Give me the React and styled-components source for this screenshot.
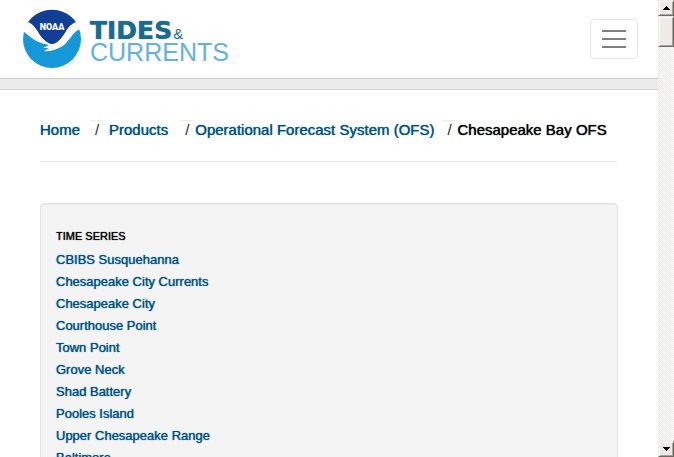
import React from "react";
import styled, { createGlobalStyle } from "styled-components";

const GlobalStyle = createGlobalStyle`
  *, *::before, *::after { box-sizing: border-box; }
  body {
    margin: 0;
    background: #fff;
    color: #000;
    font-family: "Liberation Sans", Arial, sans-serif;
  }
`;

const Shell = styled.div`
  display: flex;
  height: 100vh;
  overflow: hidden;
`;

const Page = styled.div`
  flex: 1;
  min-width: 0;
  overflow: hidden;
`;

const Header = styled.header`
  display: flex;
  align-items: center;
  justify-content: space-between;
  height: 78px;
  padding: 0 20px 0 22px;
`;

const Brand = styled.a`
  display: flex;
  align-items: center;
  gap: 8px;
  text-decoration: none;
`;

const Wordmark = styled.span`
  display: flex;
  flex-direction: column;
  padding-top: 4px;
`;

const WordTop = styled.span`
  display: flex;
  align-items: baseline;
  gap: 1px;
  color: #1b6b91;
  font-size: 15px;
  line-height: 19px;
`;

const Tides = styled.strong`
  font-family: "DejaVu Sans", "Liberation Sans", sans-serif;
  font-size: 25px;
  font-weight: 700;
  text-shadow: 0 0 1px currentColor;
`;

const Currents = styled.span`
  color: #62b1df;
  font-size: 25px;
  line-height: 19px;
`;

const MenuButton = styled.button`
  display: grid;
  place-items: center;
  width: 48px;
  height: 40px;
  padding: 0;
  background: #fff;
  border: 1px solid #e5e5e5;
  border-radius: 4px;
`;

const Band = styled.div`
  height: 12px;
  background: #ebebeb;
  border-top: 1px solid #ccc;
  border-bottom: 1px solid #d4d4d4;
`;

const Content = styled.main`
  padding: 30px 40px 0;
`;

const Crumbs = styled.ol`
  display: flex;
  margin: 0 0 41px;
  padding: 0 0 21px;
  list-style: none;
  border-bottom: 1px solid #eee;
  font-size: 15px;
  line-height: 20px;
  white-space: nowrap;
`;

const Crumb = styled.li`
  display: flex;
`;

const Separator = styled.span`
  width: 15px;
  margin-left: ${(p) => p.$gap}px;
  margin-right: ${(p) => (p.$spaced ? 4 : 0)}px;
  padding-left: 5px;
  border-top: 1px solid #eee;
  color: #222;
  line-height: 18px;
`;

const Link = styled.a`
  color: #00507f;
  text-decoration: none;
  text-shadow: 0 0 1px currentColor;
`;

const Current = styled.span`
  text-shadow: 0 0 1px currentColor;
`;

const Panel = styled.section`
  padding: 21px 15px;
  background: #f4f4f4;
  border: 1px solid #e3e3e3;
  border-radius: 4px;
  box-shadow: inset 0 1px 1px #e9e9e9;
`;

const PanelTitle = styled.h2`
  margin: 0 0 2px;
  font-size: 11px;
  font-weight: 400;
  line-height: 22px;
  text-shadow: 0 0 1px currentColor;
`;

const StationList = styled.ul`
  margin: 0;
  padding: 0;
  list-style: none;
  font-size: 13px;
  line-height: 22px;
`;

const ScrollTrack = styled.div`
  display: flex;
  flex: 0 0 16px;
  flex-direction: column;
  background: repeating-conic-gradient(#eeebe6 0 25%, #fff 0 50%) 0 0 / 2px 2px;
`;

const ScrollPart = styled.button`
  display: grid;
  place-items: center;
  flex: none;
  width: 16px;
  height: ${(p) => p.$height}px;
  margin-top: ${(p) => (p.$last ? "auto" : "0")};
  padding: 0;
  background: #eeebe6;
  border: 1px solid;
  border-color: #eeebe6 #6e6b67 #6e6b67 #eeebe6;
  box-shadow: inset 1px 1px #fff, inset -1px -1px #a8a49e;
`;

const NoaaSeal = () => (
  <svg width="60" height="60" viewBox="0 0 60 60" aria-hidden="true">
    <circle cx="30" cy="30" r="29" fill="#1697d8" />
    <path d="M5 15A29 29 0 0 1 55 15C46 19 43 36 34 37Q30 38 26 36C17 32 15 18 5 15Z" fill="#123f96" />
    <path
      d="M1 22L6 13C14 16 17 27 24 32C28 35 31 36 35 33C42 28 44 17 54 13L58 20C50 23 47 34 39 38C34 40 30 43 22 42L27 39L21 39L27 36C15 34 9 29 1 22Z"
      fill="#fff"
    />
    <path d="M12 13Q17 28 25 33Q30 37 35 33Q43 27 48 13Z" fill="#123f96" />
    <text x="30" y="21" textAnchor="middle" fill="#fff" fontFamily="Roboto, sans-serif" fontWeight="900" fontSize="9">
      NOAA
    </text>
  </svg>
);

const MenuIcon = () => (
  <svg width="24" height="18" viewBox="0 0 24 18" aria-hidden="true">
    <path d="M0 1H24M0 9H24M0 17H24" stroke="#7f7f7f" strokeWidth="2" />
  </svg>
);

const Arrow = ({ down }) => (
  <svg width="7" height="4" viewBox="0 0 7 4" shapeRendering="crispEdges" aria-hidden="true">
    <path
      d={down ? "M0 0H7V1H6V2H5V3H4V4H3V3H2V2H1V1H0Z" : "M3 0H4V1H5V2H6V3H7V4H0V3H1V2H2V1H3Z"}
      fill="#000"
    />
  </svg>
);

const stations = [
  "CBIBS Susquehanna",
  "Chesapeake City Currents",
  "Chesapeake City",
  "Courthouse Point",
  "Town Point",
  "Grove Neck",
  "Shad Battery",
  "Pooles Island",
  "Upper Chesapeake Range",
  "Baltimore",
];

export default function App() {
  return (
    <>
      <GlobalStyle />
      <Shell>
        <Page>
          <Header>
            <Brand href="#">
              <NoaaSeal />
              <Wordmark>
                <WordTop>
                  <Tides>TIDES</Tides>&amp;
                </WordTop>
                <Currents>CURRENTS</Currents>
              </Wordmark>
            </Brand>
            <MenuButton type="button" aria-label="Toggle navigation">
              <MenuIcon />
            </MenuButton>
          </Header>
          <Band />
          <Content>
            <nav aria-label="Breadcrumb">
              <Crumbs>
                <Crumb>
                  <Link href="#">Home</Link>
                </Crumb>
                <Crumb>
                  <Separator $gap={10} $spaced>/</Separator>
                  <Link href="#">Products</Link>
                </Crumb>
                <Crumb>
                  <Separator $gap={12}>/</Separator>
                  <Link href="#">Operational Forecast System (OFS)</Link>
                </Crumb>
                <Crumb aria-current="page">
                  <Separator $gap={8}>/</Separator>
                  <Current>Chesapeake Bay OFS</Current>
                </Crumb>
              </Crumbs>
            </nav>
            <Panel>
              <PanelTitle>TIME SERIES</PanelTitle>
              <StationList>
                {stations.map((name) => (
                  <li key={name}>
                    <Link href="#">{name}</Link>
                  </li>
                ))}
              </StationList>
            </Panel>
          </Content>
        </Page>
        <ScrollTrack>
          <ScrollPart type="button" aria-label="Scroll up" $height={16}>
            <Arrow />
          </ScrollPart>
          <ScrollPart type="button" aria-label="Scroll position" $height={31} />
          <ScrollPart type="button" aria-label="Scroll down" $height={16} $last>
            <Arrow down />
          </ScrollPart>
        </ScrollTrack>
      </Shell>
    </>
  );
}
